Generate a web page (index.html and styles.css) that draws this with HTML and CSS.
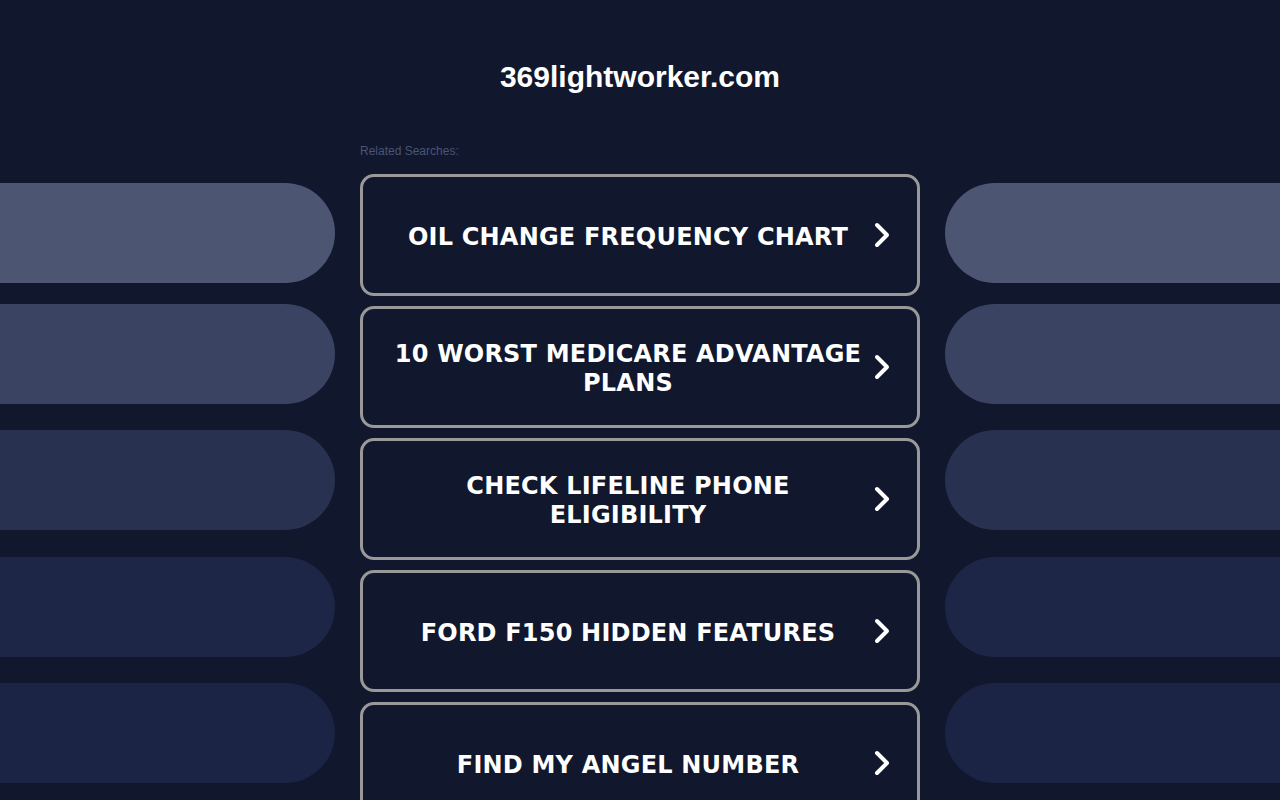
FILE: index.html
```html
<!DOCTYPE html>
<html lang="en">
<head>
<meta charset="utf-8">
<title>369lightworker.com</title>
<link rel="stylesheet" href="styles.css">
</head>
<body>
<div class="page">
  <div class="side side-left">
    <div class="pill pill-1"></div>
    <div class="pill pill-2"></div>
    <div class="pill pill-3"></div>
    <div class="pill pill-4"></div>
    <div class="pill pill-5"></div>
  </div>
  <main class="center">
    <h1 class="domain">369lightworker.com</h1>
    <div class="label">Related Searches:</div>
    <ul class="links">
      <li><a class="link" href="#"><span class="text">OIL CHANGE FREQUENCY CHART</span><svg class="chev" viewBox="0 0 18 28"><polyline points="4,4 14,14 4,24"/></svg></a></li>
      <li><a class="link" href="#"><span class="text">10 WORST MEDICARE ADVANTAGE PLANS</span><svg class="chev" viewBox="0 0 18 28"><polyline points="4,4 14,14 4,24"/></svg></a></li>
      <li><a class="link" href="#"><span class="text">CHECK LIFELINE PHONE ELIGIBILITY</span><svg class="chev" viewBox="0 0 18 28"><polyline points="4,4 14,14 4,24"/></svg></a></li>
      <li><a class="link" href="#"><span class="text">FORD F150 HIDDEN FEATURES</span><svg class="chev" viewBox="0 0 18 28"><polyline points="4,4 14,14 4,24"/></svg></a></li>
      <li><a class="link" href="#"><span class="text">FIND MY ANGEL NUMBER</span><svg class="chev" viewBox="0 0 18 28"><polyline points="4,4 14,14 4,24"/></svg></a></li>
    </ul>
  </main>
  <div class="side side-right">
    <div class="pill pill-1"></div>
    <div class="pill pill-2"></div>
    <div class="pill pill-3"></div>
    <div class="pill pill-4"></div>
    <div class="pill pill-5"></div>
  </div>
</div>
</body>
</html>
```

FILE: styles.css
```css
html, body {
  margin: 0;
  padding: 0;
  background: #11172c;
  height: 100%;
  overflow: hidden;
}
.page {
  display: grid;
  grid-template-columns: 335px 560px 335px;
  column-gap: 25px;
  width: 1280px;
}
.side {
  display: flex;
  flex-direction: column;
  padding-top: 183px;
}
.pill {
  height: 100px;
  flex: none;
}
.pill + .pill { margin-top: 26px; }
.pill-2 { margin-top: 21px !important; }
.pill-4 { margin-top: 27px !important; }
.side-left .pill { border-radius: 0 50px 50px 0; }
.side-right .pill { border-radius: 50px 0 0 50px; }
.pill-1 { background: #4c5673; }
.pill-2 { background: #3a4361; }
.pill-3 { background: #283150; }
.pill-4 { background: #1d2646; }
.pill-5 { background: #1b2444; }
.center {
  display: flex;
  flex-direction: column;
}
.domain {
  margin: 0;
  padding-top: 59px;
  height: 36px;
  line-height: 36px;
  text-align: center;
  font-family: "Liberation Sans", Arial, sans-serif;
  font-weight: bold;
  font-size: 30px;
  color: #ffffff;
}
.label {
  margin-top: 49px;
  font-family: "Liberation Sans", Arial, sans-serif;
  font-size: 12px;
  line-height: 14px;
  color: #4a5577;
}
.links {
  list-style: none;
  margin: 16px 0 0 0;
  padding: 0;
  display: flex;
  flex-direction: column;
  gap: 10px;
}
.link {
  position: relative;
  display: flex;
  align-items: center;
  justify-content: center;
  box-sizing: border-box;
  height: 122px;
  border: 3px solid #999999;
  border-radius: 14px;
  padding: 4px 51px 0 27px;
  text-decoration: none;
  background: #11172c;
}
.text {
  text-align: center;
  font-family: "DejaVu Sans", Verdana, sans-serif;
  font-weight: bold;
  font-size: 24px;
  letter-spacing: 0.2px;
  line-height: 29px;
  color: #ffffff;
}
.chev {
  position: absolute;
  right: 26px;
  top: 50%;
  width: 18px;
  height: 28px;
  margin-top: -14px;
  fill: none;
  stroke: #ffffff;
  stroke-width: 4;
  stroke-linecap: round;
  stroke-linejoin: round;
}
```
